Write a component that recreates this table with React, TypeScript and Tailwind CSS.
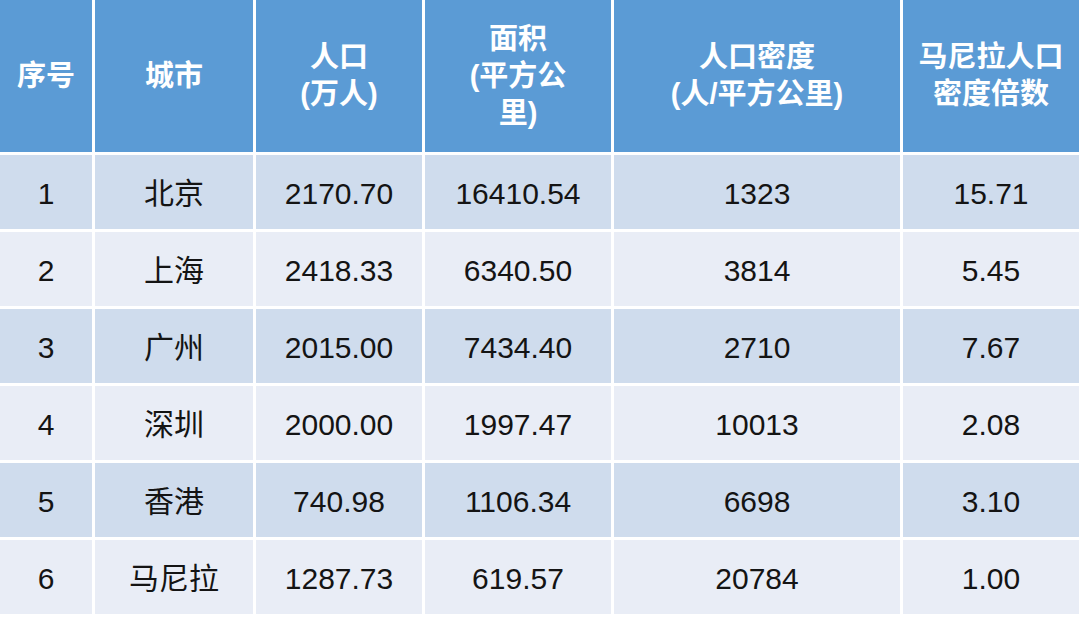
import React from "react";

const headers: string[][] = [
  ["序号"],
  ["城市"],
  ["人口", "(万人)"],
  ["面积", "(平方公", "里)"],
  ["人口密度", "(人/平方公里)"],
  ["马尼拉人口", "密度倍数"],
];

const rows: string[][] = [
  ["1", "北京", "2170.70", "16410.54", "1323", "15.71"],
  ["2", "上海", "2418.33", "6340.50", "3814", "5.45"],
  ["3", "广州", "2015.00", "7434.40", "2710", "7.67"],
  ["4", "深圳", "2000.00", "1997.47", "10013", "2.08"],
  ["5", "香港", "740.98", "1106.34", "6698", "3.10"],
  ["6", "马尼拉", "1287.73", "619.57", "20784", "1.00"],
];

export default function App() {
  return (
    <div
      className="w-[1080px] h-[618px] bg-white overflow-hidden"
      style={{ fontFamily: '"Liberation Sans", "Noto Sans CJK SC", sans-serif' }}
    >
      <div className="grid grid-cols-[92px_158px_166px_186px_286px_176px] grid-rows-[152px_repeat(6,74px)] gap-[3px] w-[1076px]">
        {headers.map((lines, i) => (
          <div
            key={"h" + i}
            className="bg-[#5b9bd5] flex flex-col items-center justify-center text-white text-[29px] font-bold leading-[37px]"
          >
            {lines.map((l, j) => (
              <div key={j} className="whitespace-nowrap">
                {l}
              </div>
            ))}
          </div>
        ))}
        {rows.map((r, ri) =>
          r.map((c, ci) => (
            <div
              key={ri + "-" + ci}
              className={
                (ri % 2 === 0 ? "bg-[#cfdced]" : "bg-[#e9edf6]") +
                " flex items-center justify-center text-[30px] text-[#141414] pt-[2px]"
              }
            >
              {c}
            </div>
          ))
        )}
      </div>
    </div>
  );
}
